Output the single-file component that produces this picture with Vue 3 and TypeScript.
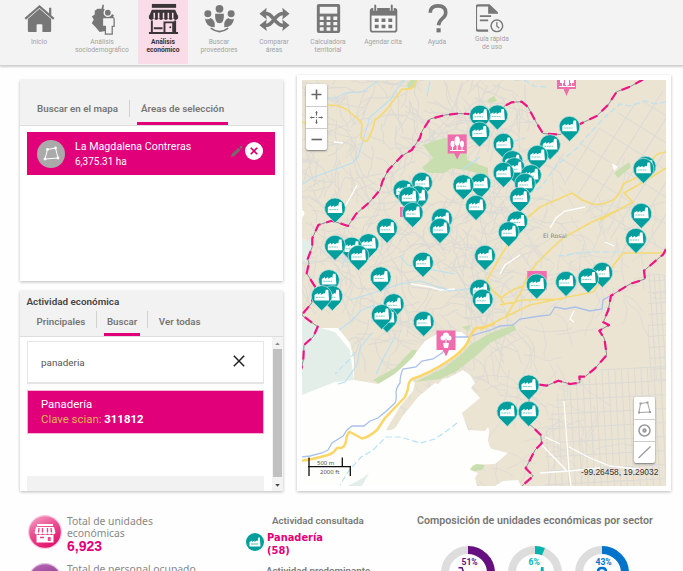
<script setup lang="ts">
interface NavItem {
  id: string
  lines: string[]
  active?: boolean
}

type Point = [number, number]

const nav: NavItem[] = [
  { id: 'home', lines: ['Inicio'] },
  { id: 'socio', lines: ['Análisis', 'sociodemográfico'] },
  { id: 'store', lines: ['Análisis', 'económico'], active: true },
  { id: 'people', lines: ['Buscar', 'proveedores'] },
  { id: 'compare', lines: ['Comparar', 'áreas'] },
  { id: 'calc', lines: ['Calculadora', 'territorial'] },
  { id: 'calendar', lines: ['Agendar cita'] },
  { id: 'help', lines: ['Ayuda'] },
  { id: 'guide', lines: ['Guía rápida', 'de uso'] },
]

const pins: Point[] = [
  [497.4, 115.3], [480, 115.5], [479.5, 132.3], [569.5, 126.7], [550, 145], [503.5, 143.7], [537.5, 155.7],
  [512.5, 161], [514.5, 168], [531, 175], [503.5, 172.7], [645.6, 166.6], [643.5, 168.7],
  [422, 182.7], [418, 196], [403.5, 190.3], [409, 197], [480.5, 183.7], [463.3, 185], [525, 183.7],
  [520, 197.5], [476, 205.7], [335, 208.3], [412.7, 212.7], [641.3, 213.7], [442, 218.7], [517.3, 221.3],
  [387, 228.5], [440, 228.7], [508.7, 232], [636, 238.7], [368.5, 244], [351.7, 247.5], [335, 245.7],
  [358.5, 255.7], [485, 255.7], [423, 262.5], [602.3, 272.7], [588.3, 278.3], [380.7, 277.2], [329, 280],
  [566, 281.7], [536.7, 284.3], [480, 289.7], [332.3, 296], [321.7, 296], [482.7, 299.5], [393.7, 304],
  [387, 318], [381.7, 314.8], [423.7, 321.7], [528.7, 385.3], [507.3, 411.7], [528.7, 411.7],
]

// Repeatable pseudo-random source, so the street mesh is stable between renders
function seeded(seed: number): () => number {
  let s = seed
  return () => {
    s = (s * 16807) % 2147483647
    return s / 2147483647
  }
}

function organicStreets(count: number, x0: number, y0: number, x1: number, y1: number, seed: number): string {
  const rnd = seeded(seed)
  let d = ''
  for (let i = 0; i < count; i++) {
    let x = x0 + rnd() * (x1 - x0)
    let y = y0 + rnd() * (y1 - y0)
    let a = rnd() * Math.PI * 2
    d += `M${x.toFixed(1)} ${y.toFixed(1)}`
    const steps = 3 + Math.floor(rnd() * 4)
    for (let k = 0; k < steps; k++) {
      a += (rnd() - 0.5) * 1.1
      const len = 4 + rnd() * 7
      x += Math.cos(a) * len
      y += Math.sin(a) * len
      d += `L${x.toFixed(1)} ${y.toFixed(1)}`
    }
  }
  return d
}

function grid(x0: number, y0: number, x1: number, y1: number, dx: number, dy: number): string {
  let d = ''
  for (let x = x0; x <= x1; x += dx) d += `M${x} ${y0}V${y1}`
  for (let y = y0; y <= y1; y += dy) d += `M${x0} ${y}H${x1}`
  return d
}

const westStreets = organicStreets(430, 302, 80, 525, 345, 77)
const midStreets = organicStreets(100, 470, 200, 655, 300, 911)
const southStreets = organicStreets(110, 375, 330, 600, 486, 4242)
const northGrid = grid(520, 40, 760, 230, 17, 23)
const southGrid = grid(540, 370, 690, 500, 6.5, 14)
const eastGrid = grid(648, 270, 680, 380, 5, 11)

const border =
  'M643 79.5L630 86.7 616.7 91.7 608 105 596.7 116 580 124 569 130 560 134.5 543 133.5 536.7 123.3 528 107 521.7 101.7 511.7 102.3 505 105.7 497 113 470 114 458 113.5 445 115 430 119 421.7 131.7 420 138 411.7 150 401.7 156 388.3 170 382.3 181.7 380 190 370 201.7 356 214 348 226 331.7 220.7 318.3 225 312.3 238.3 312.3 246.7 307.7 259 309 263 306.7 273.3 315 286.7 311.7 303 301.7 315 317.7 326.7 313.3 336.7 304 345 303.3 360 301 370'
const borderEast =
  'M666 249L663.3 254.3 644 270.7 645 279 630 284 611 295.7 608.3 310 603.3 322.3 609 325 599.3 330.7 604.3 338.3 606.7 355 595 368.3 585 376.7 579.3 376.7 580 382.7 570 384 558.3 380.7 546.7 385.7 538 384.5 529 400 529 424 531.7 426 540.7 435 541.7 443.3 535 450 525.7 468.3 533.3 476 520.7 487'
const yellow =
  'M328 105C340 105 346 108 352 114S362 120 362 125L361 137Q363 142 367 141Q372 134 375 120Q384 113 388 108L402 89Q412 90 414 86L417 79M301 122L306 123M666 152Q658 153 655 156 648 168 640 176L623 184Q620 195 613 200 600 206 593 204L582 200 572 193 540 207 527 218 516 232 500 257 487 280 492 290 500 297 505 305M666 168L645 181 624 193 633 202 600 220M618 210L590 223 563 238 550 250 537 263 528 275 521 292 505 318M666 253L623 253 610 270 593 292 563 298 530 305 503 318 480 330M500 305L523 300 563 299M500 299Q511 289 523 286'
const valleyRoad =
  'M495 323Q485 328 476 328 471 333 468 342 462 352 448 361 430 373 412 379 408 382 408 389L405 397 385 418 377 430Q369 437 362 438.500L350 432Q347 433 346 441 345 447 341 448L337 448Q334 453 328 455 315 459 301 461'
const river =
  'M610 296L603 300 602 309 590 311 575 307 565 309 555 307 550 315 540 316 520 319 513 325 500 326 491 330 480 333 468 337 455 337 442 353 433 359 422 361 416 367 403 369Q400 375 400 383 396 388 396 393 397 399 395 403 388 410 378 418L370 421 364 426 352 426 347 430 343 436 332 443 328 450 322 453 310 456 301 457'
const streams =
  'M405 79L396 90 392 98 384 105 370 117 364 137 358 157 352 163 312 178 301 185M320 98L336 98 345 93 362 92 378 81M352 238L347 252 342 268M400 256L408 265 422 268 455 274M350 300L370 294 400 284 420 281 450 291 482 287M372 322L374 305 362 310 350 322 339 330M395 337L384 357 376 374M372 333L360 348 357 365 345 382 338 384M462 170L480 157M430 81L427 96'
const dashedStreams =
  'M666 102L655 104 645 101 630 106 620 104 605 117 590 133 577 148 557 165 541 187 530 193M524 80L534 86 547 87M558 256L590 252 625 252M457 423L448 430 435 439 420 443 400 437 386 437 372 451 361 457 348 472 340 485M355 352L348 361 335 374M500 130L512 142 525 138'
</script>

<template>
  <div class="page">
    <header class="topbar">
      <a v-for="item in nav" :key="item.id" class="nav" :class="[item.id, { active: item.active }]">
        <svg class="nav-icon" viewBox="0 0 34 34">
          <g v-if="item.id === 'home'">
            <path d="M5 17.500L17 7 29 17.500V30Q29 31 28 31H20V24Q20 23 19 23H15Q14 23 14 24V31H6Q5 31 5 30Z" />
            <path d="M2.300 17.300L17 4.600 31.700 17.300M28 6V13.500" fill="none" stroke="currentColor" stroke-width="2.300" />
          </g>
          <g v-else-if="item.id === 'socio'">
            <path d="M17 2.500L18.500 3 18 7 22 9 29 14 26 18 25 24 20 30 14 31 10 26 6 22 8 18 6 15 9 13 9 9 12 7 16 7Z" />
            <g fill="#777" stroke="#f4f4f4" stroke-width="1.500">
              <circle cx="22.500" cy="11" r="3.700" />
              <path d="M18 16H28Q29 16 29 18V25H27V33H20V25H17V18Q17 16 18 16Z" fill="#f4f4f4" stroke="#777" stroke-width="1.300" />
            </g>
          </g>
          <g v-else-if="item.id === 'store'">
            <path d="M5 2H30V6H5Z" />
            <path d="M5 8H29L32 15H2Z" />
            <path d="M2 14H32V17Q29.500 20 27 17 24.500 20 22 17 19.500 20 17 17 14.500 20 12 17 9.500 20 7 17 4.500 20 2 17Z" />
            <g fill="none" stroke="#fadce8" stroke-width="1.600"><path d="M7.500 11V17M12 11V17M17 11V17M22 11V17M26.500 11V17" /></g>
            <path d="M5 19V31M29 19V31M2 32H32M7 27H16M18 32V21H27V32" fill="none" stroke="currentColor" stroke-width="2" />
            <circle cx="24" cy="26" r="1" />
          </g>
          <g v-else-if="item.id === 'people'">
            <circle cx="17" cy="7" r="4" /><circle cx="5" cy="12" r="3.600" /><circle cx="29" cy="12" r="3.600" />
            <path d="M12.500 12H21.500Q22 22 17 22T12.500 12ZM2 17Q5 19 8 16.500 13 19 12 26 3 26 2 17ZM32 17Q29 19 26 16.500 21 19 22 26 31 26 32 17Z" />
            <path d="M8 27Q17 34 26 27" fill="none" stroke="currentColor" stroke-width="1.600" />
          </g>
          <g v-else-if="item.id === 'compare'">
            <path d="M6 12H9C15 12 18 24 25 24H28M6 24H9C15 24 18 12 25 12H28" fill="none" stroke="currentColor" stroke-width="3.700" />
            <path d="M1.500 12L9 6 8 12 9 18ZM1.500 24L9 18 8 24 9 30ZM32.500 12L25 6 26 12 25 18ZM32.500 24L25 18 26 24 25 30Z" />
          </g>
          <g v-else-if="item.id === 'calc'">
            <path d="M7 2H27Q29 2 29 4V30Q29 32 27 32H7Q5 32 5 30V4Q5 2 7 2Z" />
            <g fill="#f4f4f4">
              <path d="M8 5H26V12H8Z" />
              <path d="M8 15H12V18.500H8ZM15 15H19V18.500H15ZM22 15H26V18.500H22ZM8 20.500H12V24H8ZM15 20.500H19V24H15ZM22 20.500H26V24H22ZM8 26H12V29.500H8ZM15 26H19V29.500H15ZM22 26H26V29.500H22Z" />
            </g>
          </g>
          <g v-else-if="item.id === 'calendar'">
            <rect x="3.800" y="7" width="26.500" height="23.500" rx="2" fill="#f8f8f8" stroke="currentColor" stroke-width="1.800" />
            <path d="M4 7H30V14H4Z" />
            <path d="M8.500 3.500V9M25.500 3.500V9" stroke="#f4f4f4" stroke-width="4" />
            <path d="M8.500 3.500V9M25.500 3.500V9" stroke="currentColor" stroke-width="2" stroke-linecap="round" />
            <path d="M8 17H12V20.500H8ZM15 17H19V20.500H15ZM22 17H26V20.500H22ZM8 23.500H12V27H8ZM15 23.500H19V27H15ZM22 23.500H26V27H22Z" />
          </g>
          <g v-else-if="item.id === 'help'">
            <path d="M9.500 11Q9.500 4 17.500 4T25.500 11Q25.500 14 22 17T18 24" fill="none" stroke="currentColor" stroke-width="3.700" />
            <path d="M16 27H20.300V31.300H16Z" />
          </g>
          <g v-else transform="translate(-1.500 0)">
            <path d="M26 12V11L18 3.500H7Q4.500 3.500 4.500 6V27Q4.500 29.500 7 29.500H17" transform="translate(-3 0)" fill="none" stroke="currentColor" stroke-width="2.200" />
            <path d="M14 3V12H23Z" />
            <path d="M5.500 14.500H17M5.500 19H14" stroke="currentColor" stroke-width="1.700" />
            <circle cx="23" cy="24.500" r="6" fill="#f4f4f4" stroke="currentColor" stroke-width="1.500" />
            <path d="M23 20.500V25L25.500 27" fill="none" stroke="currentColor" stroke-width="1.300" />
          </g>
        </svg>
        <span v-for="line in item.lines" :key="line" class="nav-line">{{ line }}</span>
      </a>
    </header>

    <main class="main">
      <div class="side">
        <section class="card areas">
          <div class="tabs">
            <span class="tab">Buscar en el mapa</span>
            <span class="sep"></span>
            <span class="tab on">Áreas de selección</span>
          </div>
          <div class="area">
            <svg class="area-badge" viewBox="0 0 28 28">
              <circle cx="14" cy="14" r="14" fill="#aaa" />
              <path d="M10.500 9.500L18.500 8 21 18 8 19Z" fill="none" stroke="#fff" stroke-width="1" />
              <g fill="#fff"><circle cx="10.500" cy="9.500" r="1.400" /><circle cx="18.500" cy="8" r="1.400" /><circle cx="21" cy="18" r="1.400" /><circle cx="8" cy="19" r="1.400" /></g>
            </svg>
            <div class="area-text">
              <div class="area-name">La Magdalena Contreras</div>
              <div class="area-size">6,375.31 ha</div>
            </div>
            <svg class="pencil" viewBox="0 0 14 14"><path d="M1 13L2 9.500 9 3 11.500 5.500 4.500 12ZM10 2L11 1Q12 .5 13 1.500T13 3.500L12 4.500Z" fill="#776a6e" /></svg>
            <svg class="close" viewBox="0 0 18 18">
              <circle cx="9" cy="9" r="9" fill="#fff" />
              <path d="M5.700 5.700L12.300 12.300M12.300 5.700L5.700 12.300" stroke="#d4006f" stroke-width="1.600" />
            </svg>
          </div>
        </section>

        <section class="card activity">
          <div class="activity-head">
            <h2 class="title">Actividad económica</h2>
            <div class="subtabs">
              <span class="subtab">Principales</span>
              <span class="sep"></span>
              <span class="subtab on">Buscar</span>
              <span class="sep"></span>
              <span class="subtab">Ver todas</span>
            </div>
          </div>
          <div class="activity-body">
            <div class="results">
              <div class="search">
                <span>panaderia</span>
                <svg class="clear" viewBox="0 0 12 12"><path d="M.8 .8L11.200 11.200M11.200 .8L.8 11.200" stroke="#222" stroke-width="1.500" /></svg>
              </div>
              <div class="result">
                <div class="result-name">Panadería</div>
                <div class="result-key">Clave scian: <b>311812</b></div>
              </div>
              <div class="foot"></div>
            </div>
            <div class="scroll">
              <svg viewBox="0 0 6 4"><path d="M0 4L3 0.500 6 4Z" fill="#888" /></svg>
              <div class="thumb"></div>
              <svg viewBox="0 0 6 4"><path d="M0 0L3 3.500 6 0Z" fill="#444" /></svg>
            </div>
          </div>
        </section>
      </div>

      <section class="map-card">
        <div class="map">
          <svg class="map-svg" viewBox="302 80 364 406">
            <defs>
              <clipPath id="northClip"><path d="M545 160L575 150 620 110 666 90V250H620L560 180Z" /></clipPath>
              <clipPath id="southClip"><path d="M604 320L666 330V486H545V435L560 386 600 375Z" /></clipPath>
              <clipPath id="eastClip"><path d="M648 275H666V380H648Z" /></clipPath>
              <g id="pin">
                <path d="M0 14.700L-8.300 6.300A10.400 10.400 0 1 1 8.300 6.300Z" fill="#009e9d" stroke="#b9dfda" stroke-width=".8" />
                <path d="M-7.200 4.600V-1L-4-3V-1.200L-.8-3V-1.200L2.600-3 3.200-2 4-6.300H6.600L7.400 4.600Z" fill="#fff" />
                <path d="M-5.800 1.300H3" stroke="#4dbbb9" stroke-width=".8" stroke-dasharray="2 .5" />
              </g>
            </defs>
            <rect x="302" y="80" width="364" height="406" fill="#ebe4d3" />
            <g fill="none" stroke="#dcdad6" stroke-width="1">
              <path :d="westStreets" />
              <path :d="midStreets" opacity=".85" />
              <path :d="southStreets" opacity=".8" />
              <g clip-path="url(#northClip)"><path :d="northGrid" transform="rotate(32 600 150)" /></g>
              <g clip-path="url(#southClip)"><path :d="southGrid" transform="rotate(-3 600 430)" /></g>
              <g clip-path="url(#eastClip)"><path :d="eastGrid" transform="rotate(-4 655 330)" /></g>
            </g>
            <g fill="#c8deae">
              <path d="M423 145L437 140 466 133 467 160 488 168V176L470 171 452 168 444 173 428 173 422 168 433 158Z" />
              <path d="M407 84L412 79H417L415 87 408 88ZM487 100L494 96 497 101 490 103ZM614 173L629 162 631 167 618 178Z" />
              <path d="M480 339L490 333 514 325 516 330 490 343 476 356 455 372 440 379 415 382 444 368 463 353 470 345Z" />
              <path d="M373 380L395 368 412 350 417 350 414 358 394 374 380 384ZM462 327L471 325 468 331Z" />
            </g>
            <path d="M327 328L338 328 350 343 354 360 354 380 378 384 395 374 412 358 425 341 442 331 462 332 468 338 463 350 448 361 412 380 415 383 413 391 401 405 386 430Q392 431 396 427L402 417 418 397 435 383 438 384 443 379 448 378 463 370 470 375 475 383 471 388 480 398 462 413 468 430 485 431 488 427Q490 430 488 440 489 447 492 449L508 453 495 464 473 465 470 470 478 473 475 478 477 486H302V328Z" fill="#fefefd" />
            <path d="M302 316L317 327 335 332 350 350 354 380 335 382 302 395ZM369 473L363 478 348 486H362ZM302 238L312 242 309 262 302 260Z" fill="#e4eee9" />
            <path d="M495 486L503 481 518 480 521 486ZM302 210Q307 212 302 218Z" fill="#fff" />
            <path d="M470 469L476 464 485 465 482 470 474 471Z" fill="#c8deae" />
            <g fill="none" stroke="#fff" stroke-width="1.300">
              <path d="M564 401L569 471 571 486M569 447L590 458 610 466 645 470M540 473L568 471 600 468M545 437L560 444M541 444L566 470" />
              <path d="M500 274L505 265 520 255M550 228L556 218 565 211 585 207M411 284L430 287 440 290 455 289M344 208L350 198 357 185M334 142L343 143" />
              <path d="M574 311L570 319 574 322M605 242L614 246" />
            </g>
            <path d="M612 163L618 167 614 171Z" fill="#fff" />
            <g fill="none">
              <path :d="streams" stroke="#b9e0f2" stroke-width="1.100" />
              <path :d="dashedStreams" stroke="#b5e2f7" stroke-width="1.200" stroke-dasharray="6 3" />
              <path :d="river" stroke="#a9c0ea" stroke-width="1.300" />
              <path :d="yellow" stroke="#f5da73" stroke-width="1.700" stroke-linejoin="round" />
              <path :d="valleyRoad" stroke="#fcd667" stroke-width="2.500" stroke-linejoin="round" />
              <g stroke-linejoin="round">
                <path :d="border" stroke="#8d8d92" stroke-width="1" />
                <path :d="border" stroke="#ee1484" stroke-width="2.200" stroke-dasharray="9 6" />
                <path :d="borderEast" stroke="#8d8d92" stroke-width="1" />
                <path :d="borderEast" stroke="#ee1484" stroke-width="2.200" stroke-dasharray="9 6" />
              </g>
            </g>
            <text x="543" y="238" class="place">El Rosal</text>
            <g fill="#f06cac">
              <path d="M447.700 134.500H466.700V153.500H460.200L457.200 159.500 454.200 153.500H447.700Z" />
              <path d="M557 75H576V89H569.500L566.500 96 563.500 89H557Z" />
              <path d="M527.300 271H546.700V290H527.300ZM400 207H404V217H400Z" />
              <path d="M436.500 330.500H455.500V350H449L446 356.500 443 350H436.500Z" />
            </g>
            <g fill="#fff">
              <ellipse cx="457.200" cy="141" rx="2.700" ry="4.700" /><ellipse cx="452.500" cy="144" rx="2" ry="3.200" /><ellipse cx="462" cy="144" rx="2" ry="3.200" />
              <path d="M456.600 143H457.800V151H456.600ZM452 146H453V151H452ZM461.500 146H462.500V151H461.500ZM450 150H464.500V151H450Z" />
              <path d="M560 80H564V83H560ZM565 80H569V85H565ZM570 80H574V83H570ZM559 86H575V87H559ZM562 80H563V87H562ZM566 80H567.500V87H566ZM571 80H572V87H571Z" />
              <circle cx="446" cy="335.500" r="3" /><circle cx="443" cy="338" r="2.500" /><circle cx="449" cy="338" r="2.500" />
              <path d="M445.500 337H446.500V343H449L448 348H444L443 343H445.500Z" />
            </g>
            <use v-for="(p, i) in pins" :key="i" href="#pin" :x="p[0]" :y="p[1]" />
            <g class="scale">
              <path d="M309 457.500V476M308 466.700H351M342.300 457.500V466.700M350.300 466.700V476" />
              <text x="317" y="464.500">500 m</text>
              <text x="320" y="474.200">2000 ft</text>
            </g>
            <text x="581" y="474.800" class="coords">-99.26458, 19.29032</text>
          </svg>
          <div class="ctrl zoomer">
            <span><svg viewBox="0 0 21 21"><path d="M5.500 10.500H15.500M10.500 5.500V15.500" stroke-width="1.600" /></svg></span>
            <span><svg viewBox="0 0 21 21"><path d="M4.500 10.500H8.500M12.500 10.500H16.500M10.500 4.500V8.500M10.500 12.500V16.500M10 10.500H11" stroke-width="1.200" /><path d="M5.500 9.500L4.500 10.500 5.500 11.500M15.500 9.500L16.500 10.500 15.500 11.500M9.500 5.500L10.500 4.500 11.500 5.500M9.500 15.500L10.500 16.500 11.500 15.500" stroke-width=".8" /></svg></span>
            <span><svg viewBox="0 0 21 21"><path d="M5.500 10.500H16" stroke-width="1.600" /></svg></span>
          </div>
          <div class="ctrl tools">
            <span><svg viewBox="0 0 21 21"><path d="M6.500 6.500L13.500 5.500 16 15 5 15.500Z" stroke-width=".9" /><path d="M6.500 5.500V7.500M13.500 4.500V6.500M16 14V16M5 14.500V16.500" stroke-width="2" /></svg></span>
            <span><svg viewBox="0 0 21 21"><circle cx="10.500" cy="10.500" r="5.500" stroke-width="1.500" /><circle cx="10.500" cy="10.500" r="1.300" stroke-width="1.800" /></svg></span>
            <span><svg viewBox="0 0 21 21"><path d="M4.500 16L16.500 4.500" stroke-width="1.200" /></svg></span>
          </div>
        </div>
      </section>
    </main>

    <section class="stats">
      <div class="totals">
        <div class="total">
          <svg class="orb" viewBox="0 0 34 34">
            <defs><linearGradient id="pinkOrb" x1="0" y1="0" x2=".5" y2="1"><stop offset="0" stop-color="#f5a5c8" /><stop offset=".5" stop-color="#ec4f93" /><stop offset="1" stop-color="#e3176f" /></linearGradient></defs>
            <circle cx="17" cy="17" r="17" fill="#f7c8dc" /><circle cx="17" cy="17" r="15.800" fill="url(#pinkOrb)" />
            <path d="M9 9H25V11H9ZM8 12H26L27.500 18Q25.500 20.500 23.500 18.500 21.500 20.500 19.500 18.500 17 20.500 14.500 18.500 12.500 20.500 10.500 18.500 8.500 20.500 6.500 18ZM8.500 20H25.500V27.500H8.500Z" fill="#fff" />
            <path d="M11 13L10.500 17.500M14.500 13V17.500M19.500 13V17.500M23 13L23.500 17.500M12 22.500H16M20.500 22V26M22 22V26" stroke="#eb438b" stroke-width="1.400" />
          </svg>
          <div class="total-text"><span>Total de unidades</span><span>económicas</span><strong>6,923</strong></div>
        </div>
        <div class="total">
          <svg class="orb" viewBox="0 0 34 34"><defs><linearGradient id="purpleOrb" x1="0" y1="0" x2=".3" y2="1"><stop offset="0" stop-color="#b86bb4" /><stop offset="1" stop-color="#7d2383" /></linearGradient></defs><circle cx="17" cy="17" r="17" fill="#dfbfdf" /><circle cx="17" cy="17" r="15.800" fill="url(#purpleOrb)" /></svg>
          <div class="total-text"><span>Total de personal ocupado</span></div>
        </div>
      </div>
      <div class="queried">
        <h3>Actividad consultada</h3>
        <div class="queried-row">
          <svg viewBox="-9 -9 18 18">
            <circle r="9" fill="#009e9d" />
            <path d="M-5.500 4.500V0L-3-1.500V0L-.5-1.500V0L2-1.500 2.700-.7 3.200-4.500H4.800L5.500 4.500Z" fill="#fff" />
            <path d="M-4 2H3" stroke="#009e9d" stroke-width=".7" />
          </svg>
          <div class="queried-name">Panadería<br />(58)</div>
        </div>
        <h3 class="predominant">Actividad predominante</h3>
      </div>
      <div class="sectors">
        <h3>Composición de unidades económicas por sector</h3>
        <div class="donuts">
          <svg viewBox="0 0 54 54">
            <circle class="ring" cx="27" cy="27" r="23" />
            <circle cx="27" cy="27" r="23" class="arc purple" pathLength="100" stroke-dasharray="51 49" transform="rotate(-90 27 27)" />
            <text x="20.500" y="18.500" fill="#650f80">51%</text>
            <path d="M17.500 21.700H21L24 30" fill="none" stroke="#650f80" stroke-width="1.500" />
          </svg>
          <svg viewBox="0 0 54 54">
            <circle class="ring" cx="27" cy="27" r="23" />
            <circle cx="27" cy="27" r="23" class="arc teal" pathLength="100" stroke-dasharray="6 94" transform="rotate(-90 27 27)" />
            <text x="20.500" y="18.500" fill="#00b5ad">6%</text>
            <path d="M33 21H35.500L36 30H32Z" fill="#00b5ad" />
          </svg>
          <svg viewBox="0 0 54 54">
            <circle class="ring" cx="27" cy="27" r="23" />
            <circle cx="27" cy="27" r="23" class="arc blue" pathLength="100" stroke-dasharray="43 57" transform="rotate(-90 27 27)" />
            <text x="20.500" y="18.500" fill="#0074cb">43%</text>
            <path d="M23 25.500Q23 22 27 22T31 25.500Q31 27 28 28" fill="none" stroke="#0074cb" stroke-width="2.500" />
          </svg>
        </div>
      </div>
    </section>
  </div>
</template>

<style>
body {
  background: #fefefe;
  overflow: hidden;
}
</style>

<style scoped>
.page {
  width: 683px;
  height: 571px;
  overflow: hidden;
  font-family: Roboto, sans-serif;
  color: #777;
}
.page *,
.page {
  box-sizing: border-box;
}
.topbar {
  display: grid;
  grid-template-columns: 54px 72px 50px 62px 48px 60px 50px 58px 52px;
  height: 66px;
  padding-left: 12px;
  background: #f3f3f3;
  border-bottom: 1px solid #d2d2d2;
  box-shadow: 0 1px 2px #ccc;
}
.nav {
  display: flex;
  flex-direction: column;
  align-items: center;
  height: 64px;
  padding-top: 2px;
  color: #777;
  font-size: 6.7px;
  line-height: 8.7px;
}
.nav-icon {
  width: 33px;
  height: 33px;
  margin-bottom: 2.500px;
  fill: currentColor;
}
.nav-line {
  color: #a3a3a3;
  white-space: nowrap;
}
.nav.active {
  background: #fadce8;
  color: #3b3537;
}
.nav.active .nav-line {
  color: #333;
  font-weight: 700;
}
.nav.guide .nav-icon {
  margin-bottom: -0.500px;
}
.main {
  display: flex;
  gap: 14px;
  padding: 9px 0 0 20px;
}
.side {
  width: 263px;
  padding-top: 5px;
}
.card {
  background: #fff;
  box-shadow: 0 1px 3px #bbb;
}
.areas {
  height: 201px;
}
.tabs {
  display: flex;
  align-items: flex-end;
  height: 46px;
  padding-left: 17px;
  background: #f2f2f2;
  border-bottom: 1px solid #ddd;
  font-size: 9.800px;
  font-weight: 600;
}
.tab {
  height: 28px;
  padding-top: 6px;
  line-height: 12px;
  white-space: nowrap;
}
.tab.on {
  padding-left: 4px;
  padding-right: 4px;
  border-bottom: 3px solid #e2007a;
}
.tabs .sep {
  width: 1px;
  height: 17px;
  margin: 0 7px 8px 11px;
}
.sep {
  background: #d3d3d3;
}
.area {
  display: flex;
  align-items: center;
  height: 43px;
  margin: 6px 8px 0 7px;
  padding: 0 12px 0 10px;
  background: #e2007a;
  color: #fff;
}
.area-badge {
  width: 28px;
  height: 28px;
}
.area-text {
  flex: 1;
  padding-left: 10px;
  font-size: 10.7px;
  line-height: 15px;
}
.area-size {
  font-size: 10px;
}
.pencil {
  width: 13px;
  height: 13px;
  margin: -4px 2px 0 0;
}
.close {
  width: 18px;
  height: 18px;
  margin-top: -5px;
}
.activity {
  height: 200px;
  margin-top: 10px;
}
.activity-head {
  height: 46px;
  padding: 4px 0 0 6.500px;
  background: #f2f2f2;
  border-bottom: 1px solid #ddd;
}
.title {
  margin: 0;
  font-size: 9.900px;
  line-height: 13px;
  font-weight: 600;
  color: #444;
}
.subtabs {
  display: flex;
  padding: 3px 0 0 10px;
  font-size: 9.750px;
  font-weight: 600;
}
.subtab {
  height: 25px;
  padding-top: 5px;
  line-height: 12px;
}
.subtab.on {
  padding: 5px 3px 0;
  border-bottom: 3px solid #e2007a;
}
.subtabs .sep {
  width: 1px;
  height: 17px;
  margin: 0 7px 0 10.500px;
}
.subtabs .on + .sep {
  margin-right: 10.500px;
  margin-left: 7px;
}
.activity-body {
  display: flex;
  justify-content: space-between;
  height: 154px;
}
.results {
  display: flex;
  flex-direction: column;
  width: 237px;
  margin: 4px 0 0 7px;
}
.search {
  display: flex;
  align-items: center;
  justify-content: space-between;
  height: 43px;
  padding: 0 18px 0 13px;
  border: 1px solid #e5e5e5;
  border-bottom-width: 2px;
  color: #555;
  font-size: 9.900px;
}
.clear {
  width: 12px;
  height: 12px;
  margin-top: -2px;
}
.result {
  height: 44px;
  margin-top: 6px;
  padding: 6px 13px 0;
  background: #e2007a;
  border: 1px solid #f5b5d6;
  color: #fff;
  font-size: 11.400px;
  line-height: 14.600px;
}
.result-key {
  color: #e0b850;
}
.result-key b {
  color: #fff;
}
.foot {
  flex: 1;
  margin-top: 42px;
  background: #f2f2f2;
}
.scroll {
  display: flex;
  flex-direction: column;
  align-items: center;
  width: 11px;
  padding: 5px 1px 4px 0;
  background: #f3f3f3;
}
.scroll svg {
  width: 5px;
  height: 3px;
}
.thumb {
  flex: 1;
  width: 9px;
  margin: 4px 0 7px;
  background: #c1c1c1;
}
.map-card {
  width: 374px;
  height: 416px;
  padding: 5px;
  background: #fff;
  box-shadow: 0 1px 3px #bbb;
}
.map {
  position: relative;
  width: 364px;
  height: 406px;
}
.map-svg {
  display: block;
  width: 364px;
  height: 406px;
}
.place {
  font: 6.100px 'DejaVu Sans', sans-serif;
  fill: #857b72;
  stroke: #f3eee3;
  stroke-width: 0.4px;
  paint-order: stroke;
}
.scale path {
  fill: none;
  stroke: #111;
  stroke-width: 1.3px;
}
.scale text {
  font: 6px 'Noto Sans', sans-serif;
  fill: #555;
}
.coords {
  font: 8.400px 'Liberation Sans', sans-serif;
  fill: #333;
}
.ctrl {
  position: absolute;
  display: grid;
  grid-template-rows: repeat(3, 1fr);
  width: 21px;
  height: 66px;
  border-radius: 2px;
  background: #fff;
  box-shadow: 0 1px 2px #777;
}
.ctrl span + span {
  border-top: 1px solid #ccc;
}
.ctrl svg {
  display: block;
  width: 21px;
  height: 21px;
  fill: none;
  stroke: #666;
}
.tools svg {
  stroke: #999;
}
.zoomer {
  left: 4px;
  top: 4px;
}
.tools {
  left: 332px;
  top: 317px;
}
.stats {
  display: flex;
  padding-top: 24px;
}
.totals {
  width: 246px;
  padding-left: 28px;
}
.total {
  display: flex;
  height: 48px;
}
.orb {
  width: 34px;
  height: 34px;
}
.total-text {
  padding-left: 5px;
  font: 10.350px/12px 'Noto Sans', sans-serif;
  color: #888;
  white-space: nowrap;
}
.total-text span {
  display: block;
}
.total strong {
  display: block;
  font: bold 14px/15px 'Liberation Sans', sans-serif;
  color: #e2007a;
}
.queried {
  width: 171px;
}
h3 {
  margin: 0;
  font-size: 9.750px;
  line-height: 12px;
  font-weight: 600;
  white-space: nowrap;
}
.queried h3 {
  padding-left: 26px;
}
.queried-row {
  display: flex;
  gap: 3px;
  padding-top: 4px;
}
.queried-row svg {
  width: 18px;
  height: 18px;
  margin-top: 2px;
}
.queried-name {
  font: bold 9.900px/13px 'DejaVu Sans', sans-serif;
  color: #e2007a;
}
.queried .predominant {
  padding: 8px 0 0 20px;
}
.sectors h3 {
  font-size: 10.680px;
}
.donuts {
  display: flex;
  gap: 13px;
  padding: 19px 0 0 24px;
}
.donuts svg {
  width: 54px;
  height: 54px;
}
.donuts text {
  font: bold 8.600px Roboto, sans-serif;
}
.ring,
.arc {
  fill: none;
  stroke: #ddd;
  stroke-width: 8;
}
.purple {
  stroke: #650f80;
}
.teal {
  stroke: #00b5ad;
}
.blue {
  stroke: #0074cb;
}
</style>
